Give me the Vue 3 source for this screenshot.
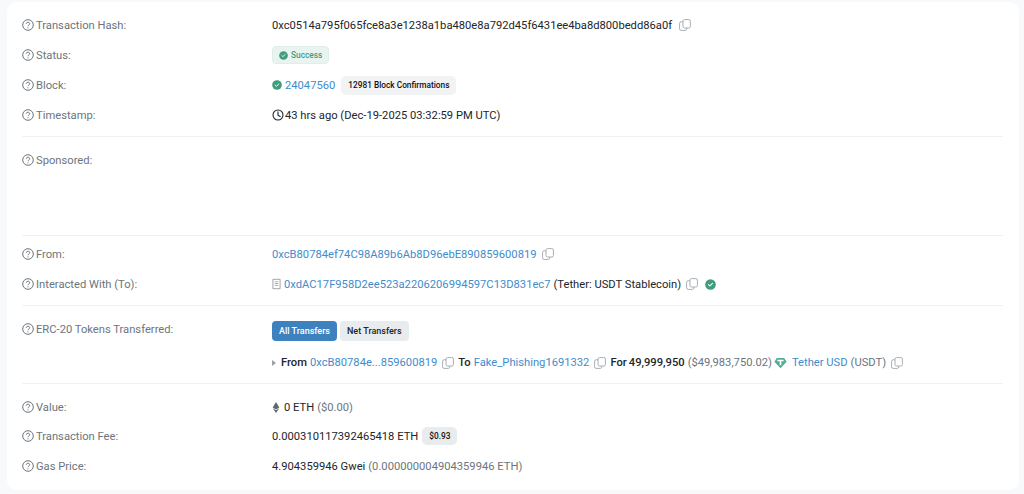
<template>
  <div class="page">
    <div class="card">
      <section class="section first">
        <div class="row">
          <div class="label"><svg class="help" viewBox="0 0 12 12"><use href="#help-icon" /></svg>Transaction Hash:</div>
          <div class="value">
            <span>0xc0514a795f065fce8a3e1238a1ba480e8a792d45f6431ee4ba8d800bedd86a0f</span>
            <svg class="copy hash-copy" viewBox="0 0 12 12"><use href="#copy-icon" /></svg>
          </div>
        </div>
        <div class="row">
          <div class="label"><svg class="help" viewBox="0 0 12 12"><use href="#help-icon" /></svg>Status:</div>
          <div class="value">
            <span class="status">
              <svg class="check small" viewBox="0 0 12 12"><use href="#check-icon" /></svg>Success
            </span>
          </div>
        </div>
        <div class="row">
          <div class="label"><svg class="help" viewBox="0 0 12 12"><use href="#help-icon" /></svg>Block:</div>
          <div class="value">
            <svg class="check" viewBox="0 0 12 12"><use href="#check-icon" /></svg>
            <a class="link block-no">24047560</a>
            <span class="pill">12981 Block Confirmations</span>
          </div>
        </div>
        <div class="row">
          <div class="label"><svg class="help" viewBox="0 0 12 12"><use href="#help-icon" /></svg>Timestamp:</div>
          <div class="value">
            <svg class="clock" viewBox="0 0 12 12">
              <circle cx="6" cy="6" r="5" fill="none" stroke="#212529" stroke-width="1.1" />
              <path d="M6 2.900v3.300l2.200 1.300" fill="none" stroke="#212529" stroke-width="1.1" stroke-linecap="round" />
            </svg>
            <span>43 hrs ago (Dec-19-2025 03:32:59 PM UTC)</span>
          </div>
        </div>
      </section>

      <section class="section sponsored">
        <div class="row">
          <div class="label"><svg class="help" viewBox="0 0 12 12"><use href="#help-icon" /></svg>Sponsored:</div>
        </div>
      </section>

      <section class="section parties">
        <div class="row">
          <div class="label"><svg class="help" viewBox="0 0 12 12"><use href="#help-icon" /></svg>From:</div>
          <div class="value">
            <a class="link">0xcB80784ef74C98A89b6Ab8D96ebE890859600819</a>
            <svg class="copy" viewBox="0 0 12 12"><use href="#copy-icon" /></svg>
          </div>
        </div>
        <div class="row">
          <div class="label"><svg class="help" viewBox="0 0 12 12"><use href="#help-icon" /></svg>Interacted With (To):</div>
          <div class="value">
            <svg class="doc" viewBox="0 0 10 12">
              <path d="M1 .8h8v10.400H1z" fill="none" stroke="#8b9299" stroke-width=".9" />
              <path d="M3 3.500h4M3 5.500h4M3 7.500h4" stroke="#8b9299" stroke-width=".8" />
            </svg>
            <a class="link">0xdAC17F958D2ee523a2206206994597C13D831ec7</a>
            <span class="contract-name">(Tether: USDT Stablecoin)</span>
            <svg class="copy" viewBox="0 0 12 12"><use href="#copy-icon" /></svg>
            <svg class="check verified" viewBox="0 0 12 12"><use href="#check-icon" /></svg>
          </div>
        </div>
      </section>

      <section class="section tokens">
        <div class="label token-label"><svg class="help" viewBox="0 0 12 12"><use href="#help-icon" /></svg>ERC-20 Tokens Transferred:</div>
        <div class="token-body">
          <div class="tabs">
            <span class="tab active">All Transfers</span>
            <span class="tab">Net Transfers</span>
          </div>
          <div class="transfer">
            <span class="caret"></span>
            <b>From</b>
            <a class="link">0xcB80784e...859600819</a>
            <svg class="copy" viewBox="0 0 12 12"><use href="#copy-icon" /></svg>
            <b>To</b>
            <a class="link">Fake_Phishing1691332</a>
            <svg class="copy" viewBox="0 0 12 12"><use href="#copy-icon" /></svg>
            <b class="for">For</b>
            <b class="amount">49,999,950</b>
            <span class="muted">($49,983,750.02)</span>
            <svg class="tether" viewBox="0 0 14 12">
              <path d="M3 .6h8l2.600 4.100L7 11.600.4 4.700z" fill="#50af95" />
              <path d="M3.600 2.600h6.800v1.500H7.900v4.400H6.100V4.100H3.600z" fill="#fff" />
            </svg>
            <a class="link tether-link">Tether USD</a>
            <span class="muted">(USDT)</span>
            <svg class="copy" viewBox="0 0 12 12"><use href="#copy-icon" /></svg>
          </div>
        </div>
      </section>

      <section class="section amounts">
        <div class="row short">
          <div class="label"><svg class="help" viewBox="0 0 12 12"><use href="#help-icon" /></svg>Value:</div>
          <div class="value">
            <svg class="eth" viewBox="0 0 8 12">
              <path d="M4 0 .4 6 4 8.100 7.600 6z" fill="#5f666d" />
              <path d="M.4 6.800 4 12l3.600-5.200L4 8.900z" fill="#5f666d" />
            </svg>
            <span>0 ETH</span>
            <span class="muted">($0.00)</span>
          </div>
        </div>
        <div class="row">
          <div class="label"><svg class="help" viewBox="0 0 12 12"><use href="#help-icon" /></svg>Transaction Fee:</div>
          <div class="value">
            <span>0.000310117392465418 ETH</span>
            <span class="pill fee-pill">$0.93</span>
          </div>
        </div>
        <div class="row">
          <div class="label"><svg class="help" viewBox="0 0 12 12"><use href="#help-icon" /></svg>Gas Price:</div>
          <div class="value">
            <span>4.904359946 Gwei</span>
            <span class="muted">(0.000000004904359946 ETH)</span>
          </div>
        </div>
      </section>
    </div>

    <svg class="defs" width="0" height="0">
      <defs>
        <g id="help-icon">
          <circle cx="6" cy="6" r="5.300" fill="none" stroke="#6c757d" stroke-width="1" />
          <path d="M4.300 4.800c0-2.100 3.400-2.100 3.400-.1 0 1.300-1.700 1.200-1.700 2.500" fill="none" stroke="#6c757d" stroke-width="1" />
          <circle cx="6" cy="8.800" r=".6" fill="#6c757d" />
        </g>
        <g id="copy-icon">
          <rect x="4" y=".6" width="7.400" height="8.400" rx="1.500" fill="none" stroke="#a9afb5" stroke-width="1" />
          <path d="M4 2.800H2.100A1.500 1.500 0 0 0 .6 4.300v5.600a1.500 1.500 0 0 0 1.500 1.500h4.200a1.500 1.500 0 0 0 1.500-1.500V9" fill="none" stroke="#a9afb5" stroke-width="1" />
        </g>
        <g id="check-icon">
          <circle cx="6" cy="6" r="5.800" fill="#3f9d7d" />
          <path d="M3.800 6.100 5.300 7.500 8.200 4.700" fill="none" stroke="#fff" stroke-width="1.100" stroke-linecap="round" stroke-linejoin="round" />
        </g>
      </defs>
    </svg>
  </div>
</template>

<script setup>
</script>

<style>
html, body {
  margin: 0;
  background: #f8f9fa;
}
</style>

<style scoped>
.page {
  height: 494px;
  padding: 2px 5px 4px 7px;
  box-sizing: border-box;
  background: #f8f9fa;
  font-family: Roboto, "Liberation Sans", sans-serif;
  font-size: 11.2px;
  color: #212529;
  overflow: hidden;
}

.card {
  height: 488px;
  box-sizing: border-box;
  padding: 0 16px 0 15px;
  background: #fff;
  border-radius: 10px;
}

.section {
  border-bottom: 1px solid #eff1f3;
}

.first {
  padding: 8px 0 6px;
}

.sponsored {
  height: 99px;
  box-sizing: border-box;
  padding-top: 8px;
}

.parties {
  padding: 3px 0 6px;
}

.tokens {
  display: flex;
  height: 78px;
  box-sizing: border-box;
  padding-top: 15px;
}

.amounts {
  padding-top: 9px;
  border-bottom: 0;
}

.row {
  display: flex;
  align-items: center;
  height: 30px;
}

.row.short {
  height: 28px;
}

.label {
  display: flex;
  align-items: center;
  flex: 0 0 250px;
  color: #6c757d;
}

.token-label {
  height: 16px;
}

.help {
  width: 12px;
  height: 12px;
  margin-right: 2px;
}

.value {
  display: flex;
  align-items: center;
  white-space: nowrap;
}

.link {
  color: #3f8ccb;
}

.muted {
  color: #6c757d;
  margin-left: 3px;
}

.copy {
  width: 12px;
  height: 12px;
  margin: 0 5px;
  flex: none;
}

.hash-copy {
  margin-left: 7px;
}

.status {
  display: flex;
  align-items: center;
  height: 18px;
  padding: 0 6px;
  font-size: 8.3px;
  font-weight: 500;
  color: #3f9d7d;
  background: #e9f4f0;
  border: 1px solid #dfeee9;
  border-radius: 4px;
  box-sizing: border-box;
}

.check {
  width: 10px;
  height: 10px;
  flex: none;
}

.check.small {
  width: 9px;
  height: 9px;
  margin-right: 3px;
}

.verified {
  margin-left: 2px;
  width: 11px;
  height: 11px;
}

.block-no {
  margin-left: 3px;
}

.pill {
  margin-left: 6px;
  padding: 0 7px;
  height: 19px;
  display: flex;
  align-items: center;
  font-size: 8.3px;
  font-weight: 500;
  background: #f1f3f5;
  border-radius: 5px;
  color: #111;
}

.fee-pill {
  margin-left: 4px;
  height: 18px;
  padding: 0 7px;
  background: #e9ecef;
}

.clock {
  width: 12px;
  height: 12px;
  margin-right: 1px;
}

.doc {
  width: 9px;
  height: 12px;
  margin-right: 3px;
}

.contract-name {
  margin-left: 3px;
  color: #212529;
}

.token-body {
  display: flex;
  flex-direction: column;
}

.tabs {
  display: flex;
  gap: 3px;
}

.tab {
  display: flex;
  align-items: center;
  height: 20px;
  padding: 0 7px;
  font-size: 9px;
  font-weight: 500;
  border-radius: 4px;
  background: #e9ecef;
  color: #212529;
}

.tab.active {
  background: #3d82bf;
  color: #fff;
}

.transfer {
  display: flex;
  align-items: center;
  margin-top: 15px;
  white-space: nowrap;
}

.transfer b {
  font-weight: 500;
  margin-right: 3px;
}

.transfer .copy {
  margin-right: 4px;
}

.transfer .for {
  margin-right: 2px;
}

.transfer .amount {
  margin-right: 0;
}

.caret {
  width: 0;
  height: 0;
  margin-right: 5px;
  border-left: 4px solid #9aa0a6;
  border-top: 3px solid transparent;
  border-bottom: 3px solid transparent;
}

.tether {
  width: 13px;
  height: 12px;
  margin: 0 4px 0 2px;
}

.tether-link {
  margin-left: 1px;
}

.eth {
  width: 8px;
  height: 11px;
  margin-right: 4px;
}

.defs {
  position: absolute;
}
</style>
